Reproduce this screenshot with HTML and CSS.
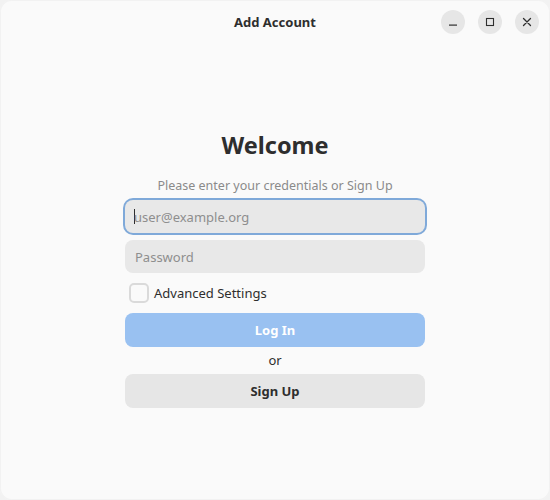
FILE: index.html
```html
<!DOCTYPE html>
<html lang="en">
<head>
    <meta charset="UTF-8">
    <meta name="viewport" content="width=device-width, initial-scale=1.0">
    <title>Add Account</title>
    <link rel="stylesheet" href="styles.css">
</head>
<body>
    <div class="window">
        <div class="headerbar">
            <div class="title">Add Account</div>
            <div class="window-controls">
                <button class="wm-button" aria-label="Minimize">
                    <svg width="16" height="16" viewBox="0 0 16 16"><rect x="4" y="10.5" width="8" height="1.2" fill="#2e2e2e"/></svg>
                </button>
                <button class="wm-button" aria-label="Maximize">
                    <svg width="16" height="16" viewBox="0 0 16 16"><rect x="4.5" y="4.5" width="7" height="7" fill="none" stroke="#2e2e2e" stroke-width="1.1"/></svg>
                </button>
                <button class="wm-button" aria-label="Close">
                    <svg width="16" height="16" viewBox="0 0 16 16"><path d="M4.5 4.5 L11.5 11.5 M11.5 4.5 L4.5 11.5" stroke="#2e2e2e" stroke-width="1.3" stroke-linecap="round"/></svg>
                </button>
            </div>
        </div>

        <div class="content">
            <div class="login-box">
                <h1 class="welcome">Welcome</h1>
                <div class="subtitle">Please enter your credentials or Sign Up</div>
                <div class="entry focused"><span class="caret"></span><span class="placeholder">user@example.org</span></div>
                <div class="entry"><span class="placeholder">Password</span></div>
                <label class="check-row">
                    <span class="checkbox"></span>
                    <span>Advanced Settings</span>
                </label>
                <button class="btn btn-login">Log In</button>
                <div class="or">or</div>
                <button class="btn btn-signup">Sign Up</button>
            </div>
        </div>
    </div>
</body>
</html>
```

FILE: styles.css
```css
html, body {
    margin: 0;
    height: 100%;
    background: #f2f2f2;
}
body {
    font-family: "Noto Sans", "Open Sans", sans-serif;
    color: #2e2e2e;
}
.window {
    height: 500px;
    background: #fafafa;
    border-radius: 12px;
    box-shadow: inset 0 0 0 1px rgba(0, 0, 0, 0.03);
    display: flex;
    flex-direction: column;
}
.headerbar {
    height: 45px;
    display: flex;
    align-items: center;
    justify-content: center;
    position: relative;
}
.title {
    font-size: 13px;
    font-weight: bold;
    color: #2e2e2e;
    margin-top: -1px;
}
.window-controls {
    position: absolute;
    right: 11px;
    top: 10px;
    display: flex;
    gap: 13px;
}
.wm-button {
    width: 24px;
    height: 24px;
    border-radius: 50%;
    border: none;
    background: #e6e6e6;
    padding: 0;
    display: flex;
    align-items: center;
    justify-content: center;
}
.content {
    flex: 1;
    display: flex;
    justify-content: center;
}
.login-box {
    width: 300px;
    display: flex;
    flex-direction: column;
    padding-top: 84px;
}
.welcome {
    margin: 0;
    text-align: center;
    font-size: 23.5px;
    font-weight: bold;
    color: #2e2e2e;
    line-height: 32px;
}
.subtitle {
    text-align: center;
    font-size: 12.5px;
    color: #8a8a8a;
    margin-top: 16px;
    line-height: 18px;
}
.entry {
    height: 33px;
    box-sizing: border-box;
    border-radius: 8px;
    background: #e8e8e8;
    display: flex;
    align-items: center;
    padding: 0 10px;
    margin-top: 5px;
    font-size: 13px;
}
.entry + .entry {
    margin-top: 7px;
}
.entry.focused {
    box-shadow: 0 0 0 2px #7fa9d9;
    padding-left: 9px;
}
.caret {
    width: 1px;
    height: 15px;
    background: #2e2e2e;
    margin-right: -1px;
}
.placeholder {
    color: #8e8e8e;
}
.check-row {
    display: flex;
    align-items: center;
    gap: 5px;
    margin: 10px 0 0 4px;
    font-size: 13px;
    color: #2e2e2e;
}
.checkbox {
    width: 16px;
    height: 16px;
    border: 2px solid #dadada;
    border-radius: 5px;
    background: #fafafa;
}
.btn {
    height: 34px;
    border: none;
    border-radius: 8px;
    font-family: inherit;
    font-size: 13px;
    font-weight: bold;
}
.btn-login {
    margin-top: 10px;
    background: #99c1f1;
    color: #ffffff;
}
.btn-signup {
    background: #e6e6e6;
    color: #2e2e2e;
}
.or {
    text-align: center;
    font-size: 13px;
    color: #2e2e2e;
    height: 27px;
    line-height: 27px;
}
```
